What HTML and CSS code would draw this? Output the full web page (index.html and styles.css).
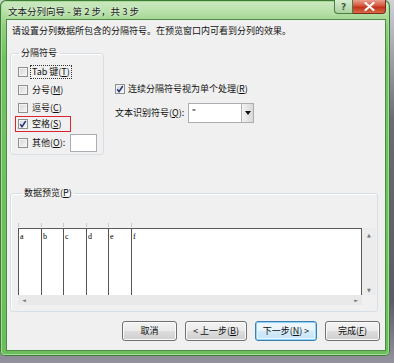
FILE: index.html
```html
<!DOCTYPE html>
<html lang="zh-CN">
<head>
<meta charset="utf-8">
<link rel="stylesheet" href="styles.css">
</head>
<body>
<div class="window">
  <div class="titlebar">
    <span class="title">文本分列向导 - 第 2 步，共 3 步</span>
    <div class="caption-btns">
      <span class="cap help">?</span>
      <span class="cap close"><svg width="11" height="9" viewBox="0 0 11 9"><path d="M1.5 1 L9.5 8 M9.5 1 L1.5 8" stroke="#fff" stroke-width="2.2" stroke-linecap="round"/></svg></span>
    </div>
  </div>
  <div class="content">
    <p class="intro">请设置分列数据所包含的分隔符号。在预览窗口内可看到分列的效果。</p>
    <div class="options">
      <fieldset class="group delims">
        <legend>分隔符号</legend>
        <label class="opt"><span class="cb"></span><span class="focus">Tab 键(<u>T</u>)</span></label>
        <label class="opt"><span class="cb"></span>分号(<u>M</u>)</label>
        <label class="opt"><span class="cb"></span>逗号(<u>C</u>)</label>
        <label class="opt opt-marked"><span class="cb"><svg width="8" height="8" viewBox="0 0 8 8"><path d="M1.2 4.2 L3 6.6 L6.8 1" fill="none" stroke="#22367e" stroke-width="1.5"/></svg></span>空格(<u>S</u>)</label>
        <label class="opt opt-other"><span class="cb"></span>其他(<u>O</u>):<span class="textbox"></span></label>
      </fieldset>
      <div class="right-col">
        <label class="opt-right"><span class="cb"><svg width="8" height="8" viewBox="0 0 8 8"><path d="M1.2 4.2 L3 6.6 L6.8 1" fill="none" stroke="#22367e" stroke-width="1.5"/></svg></span>连续分隔符号视为单个处理(<u>R</u>)</label>
        <div class="qualifier">
          <span>文本识别符号(<u>Q</u>):</span>
          <div class="select"><span class="select-val">"</span><span class="select-btn"><svg width="6" height="4" viewBox="0 0 6 4"><path d="M0 0 H6 L3 4 Z" fill="#111"/></svg></span></div>
        </div>
      </div>
    </div>
    <fieldset class="group preview">
      <legend>数据预览(<u>P</u>)</legend>
      <div class="ruler"></div>
      <div class="grid">
        <div class="data">
          <div class="col c23">a</div>
          <div class="col c22">b</div>
          <div class="col c23">c</div>
          <div class="col c22">d</div>
          <div class="col c23">e</div>
          <div class="col last">f</div>
        </div>
        <div class="vscroll"><span class="arr">▲</span><span class="arr">▼</span></div>
        <div class="hscroll"><span class="arr">◄</span><span class="arr">►</span></div>
        <div class="corner"></div>
      </div>
    </fieldset>
    <div class="buttons">
      <button class="btn">取消</button>
      <button class="btn btn-wide">&lt; 上一步(<u>B</u>)</button>
      <button class="btn btn-wide btn-default">下一步(<u>N</u>) &gt;</button>
      <button class="btn">完成(<u>F</u>)</button>
    </div>
  </div>
</div>
</body>
</html>
```
FILE: styles.css
```css
* { box-sizing: border-box; }
html, body { margin: 0; padding: 0; }
body {
  width: 394px;
  height: 363px;
  background: linear-gradient(#cfd3d6 0, #6a6b74 120px, #5b5a66 300px, #9592a0 100%);
  font-family: "Noto Sans CJK SC", "Noto Sans", sans-serif;
  font-size: 9px;
  color: #111;
  overflow: hidden;
}
.window {
  width: 390px;
  height: 356px;
  border-radius: 6px 6px 5px 5px;
  background: linear-gradient(#cfe9c4 0, #b7e0a8 12px, #8fd07f 26px, #71c262 60px, #6cbe5d 100%);
  box-shadow: inset 0 0 0 1px #3f7a36, inset 0 0 0 2px #a6dc98;
  display: flex;
  flex-direction: column;
}
.titlebar {
  height: 20px;
  display: flex;
  align-items: flex-start;
  justify-content: space-between;
  padding-left: 8px;
}
.title {
  font-size: 9.5px;
  line-height: 12px;
  margin-top: 5px;
  color: #1a1a1a;
  text-shadow: 0 0 4px #eaf6e4, 0 0 2px #eaf6e4;
}
.caption-btns {
  display: flex;
  margin-right: 4px;
}
.cap {
  height: 14px;
  display: flex;
  align-items: center;
  justify-content: center;
  border: 1px solid #4c7b45;
  border-top: none;
}
.help {
  width: 19px;
  border-radius: 0 0 0 4px;
  background: linear-gradient(#d8ecd2, #a9d39f);
  color: #3c5a3a;
  font-family: "DejaVu Sans", sans-serif;
  font-size: 9px;
  font-weight: bold;
}
.close {
  width: 33px;
  border-left: none;
  border-radius: 0 0 4px 0;
  background: linear-gradient(#e9a08f 0, #d5553c 45%, #c3321b 55%, #d86a45 100%);
  border-color: #7a2c1c;
}
.content {
  flex: 1;
  margin: 0 5px 6px 7px;
  background: #f0f0f0;
  box-shadow: 0 0 0 1px #4f8a46;
  display: flex;
  flex-direction: column;
}
.intro {
  margin: 5px 0 0 5px;
  line-height: 12px;
}
.options {
  display: flex;
  align-items: flex-start;
  margin-top: 10px;
}
.group {
  margin: 0;
  border: 1px solid #d5dfe5;
  border-radius: 3px;
  box-shadow: inset 1px 1px 0 #fff;
  min-width: 0;
}
.group legend {
  padding: 0 2px;
  margin-left: 4px;
  line-height: 12px;
}
.delims {
  margin-left: 3px;
  width: 94px;
  padding: 4px 2px 2px 4px;
}
.opt {
  display: flex;
  align-items: center;
  height: 18px;
  padding-left: 3px;
  line-height: 12px;
}
.cb {
  width: 10px;
  height: 10px;
  flex: none;
  border: 1px solid #8e8f8f;
  background: linear-gradient(135deg, #d6d6d6, #f7f7f7);
  box-shadow: inset 0 0 0 1px #f4f4f4;
  margin-right: 4px;
  display: flex;
  align-items: center;
  justify-content: center;
}
.focus {
  outline: 1px dotted #333;
  outline-offset: 0;
  padding: 0 1px;
  margin-left: -1px;
}
.opt-marked {
  width: 56px;
  height: 16px;
  margin-top: -1px;
  padding: 0 0 0 2px;
  border: 1px solid #d8262c;
}
.opt-other {
  height: 19px;
  margin-top: 1px;
}
.textbox {
  width: 27px;
  height: 18px;
  margin-left: 5px;
  background: #fff;
  border: 1px solid #abadb3;
}
.right-col {
  margin-left: 11px;
  margin-top: 35px;
  display: flex;
  flex-direction: column;
}
.opt-right {
  display: flex;
  align-items: center;
  height: 14px;
  line-height: 12px;
}
.opt-right .cb { margin-right: 3px; }
.qualifier {
  display: flex;
  align-items: center;
  margin-top: 7px;
  height: 20px;
  line-height: 12px;
}
.select {
  margin-left: 4px;
  width: 66px;
  height: 20px;
  background: #fff;
  border: 1px solid #abadb3;
  display: flex;
}
.select-val {
  flex: 1;
  padding: 2px 0 0 3px;
  font-family: "Liberation Sans", sans-serif;
}
.select-btn {
  width: 12px;
  display: flex;
  align-items: center;
  justify-content: center;
  border-left: 1px solid #b6b6b6;
  background: linear-gradient(90deg, #f2f2f2, #d9d9d9);
}
.preview {
  margin: 32px 7px 0 3px;
  padding: 23px 1px 6px 7px;
}
.ruler {
  height: 6px;
  background:
    linear-gradient(#c8c8c8, #c8c8c8) 0 1px / 1px 4px no-repeat,
    linear-gradient(#c8c8c8, #c8c8c8) 23px 1px / 1px 4px no-repeat,
    linear-gradient(#c8c8c8, #c8c8c8) 45px 1px / 1px 4px no-repeat,
    linear-gradient(#c8c8c8, #c8c8c8) 68px 1px / 1px 4px no-repeat,
    linear-gradient(#c8c8c8, #c8c8c8) 90px 1px / 1px 4px no-repeat,
    linear-gradient(#c8c8c8, #c8c8c8) 113px 1px / 1px 4px no-repeat;
}
.grid {
  display: grid;
  grid-template-columns: 344px 14px;
  grid-template-rows: 67px 10px;
}
.data {
  display: flex;
  background: #fff;
  border-top: 1px solid #5a5a5a;
  border-right: 1px solid #5a5a5a;
}
.col {
  border-left: 1px solid #555;
  font-family: "Liberation Serif", serif;
  font-size: 8px;
  line-height: 10px;
  padding: 3px 0 0 1px;
  color: #000;
}
.c23 { width: 23px; }
.c22 { width: 22px; }
.last { flex: 1; }
.vscroll {
  background: #ececec;
  display: flex;
  flex-direction: column;
  justify-content: space-between;
  align-items: center;
  padding: 4px 0 2px;
}
.hscroll {
  background: #e9e9e9;
  display: flex;
  justify-content: space-between;
  align-items: center;
  padding: 0 4px 0 4px;
}
.corner { background: #f0f0f0; }
.arr {
  font-family: "DejaVu Sans", sans-serif;
  font-size: 5px;
  line-height: 6px;
  color: #777;
}
.buttons {
  display: flex;
  justify-content: flex-end;
  gap: 8px;
  margin-top: 9px;
  padding-right: 5px;
}
.btn {
  width: 55px;
  height: 20px;
  padding: 0;
  font-family: "Noto Sans CJK SC", "Noto Sans", sans-serif;
  font-size: 9px;
  line-height: 12px;
  color: #111;
  border: 1px solid #707070;
  border-radius: 3px;
  background: linear-gradient(#f3f3f3 0, #ebebeb 48%, #dddddd 52%, #cfcfcf 100%);
  box-shadow: inset 0 0 0 1px #fbfbfb;
}
.btn-wide { width: 62px; }
.btn-default {
  border-color: #3c7fb1;
  box-shadow: inset 0 0 0 1px #8fd3f5, inset 0 0 0 2px #eaf6fd;
  background: linear-gradient(#f3f9fd 0, #e6f3fb 48%, #d3ebf9 52%, #c6e3f6 100%);
}
u { text-decoration-thickness: 1px; text-underline-offset: 1px; }
```
